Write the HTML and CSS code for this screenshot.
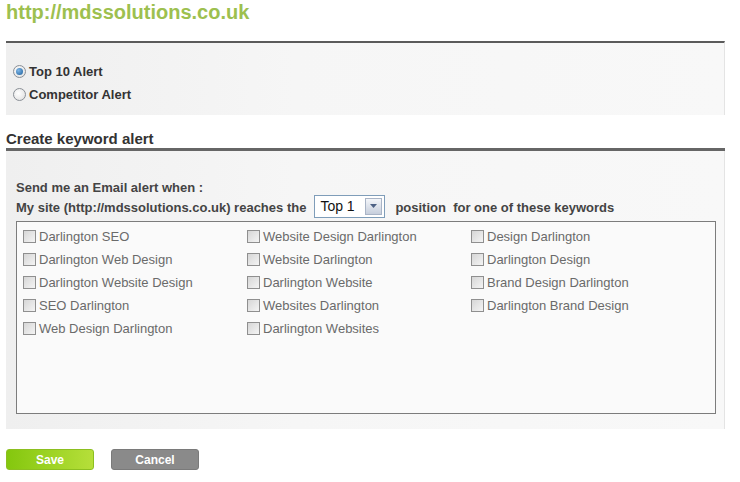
FILE: index.html
```html
<!DOCTYPE html>
<html lang="en">
  <head>
    <meta charset="UTF-8" />
    <title>Keyword Alerts - mdssolutions.co.uk</title>
    <link rel="stylesheet" href="styles.css">
  </head>
  <body>
    <div class="page">
      <h1 class="site-url">http://mdssolutions.co.uk</h1>

      <div class="panel alert-type">
        <label class="radio-row"><span class="radio checked"></span>Top 10 Alert</label>
        <label class="radio-row"><span class="radio"></span>Competitor Alert</label>
      </div>

      <h2 class="section-title">Create keyword alert</h2>

      <div class="panel keyword-panel">
        <p class="intro">Send me an Email alert when :</p>
        <div class="reach-row">
          <span>My site (http://mdssolutions.co.uk) reaches the</span>
          <div class="fake-select">
            <span class="fake-select-value">Top 1</span>
            <span class="fake-select-btn">
              <svg width="7" height="4" viewBox="0 0 7 4"><path d="M0 0h7L3.5 4z" fill="#4d6185"/></svg>
            </span>
          </div>
          <span>position&nbsp; for one of these keywords</span>
        </div>

        <div class="keyword-box">
          <label class="kw"><span class="checkbox"></span>Darlington SEO</label>
          <label class="kw"><span class="checkbox"></span>Website Design Darlington</label>
          <label class="kw"><span class="checkbox"></span>Design Darlington</label>
          <label class="kw"><span class="checkbox"></span>Darlington Web Design</label>
          <label class="kw"><span class="checkbox"></span>Website Darlington</label>
          <label class="kw"><span class="checkbox"></span>Darlington Design</label>
          <label class="kw"><span class="checkbox"></span>Darlington Website Design</label>
          <label class="kw"><span class="checkbox"></span>Darlington Website</label>
          <label class="kw"><span class="checkbox"></span>Brand Design Darlington</label>
          <label class="kw"><span class="checkbox"></span>SEO Darlington</label>
          <label class="kw"><span class="checkbox"></span>Websites Darlington</label>
          <label class="kw"><span class="checkbox"></span>Darlington Brand Design</label>
          <label class="kw"><span class="checkbox"></span>Web Design Darlington</label>
          <label class="kw"><span class="checkbox"></span>Darlington Websites</label>
        </div>
      </div>

      <div class="actions">
        <button class="btn save">Save</button>
        <button class="btn cancel">Cancel</button>
      </div>
    </div>
  </body>
</html>
```

FILE: styles.css
```css
body {
  margin: 0;
  background: white;
  font-family: "Liberation Sans", Arial, sans-serif;
  color: #333;
}
.page {
  width: 719px;
  padding: 0 6px;
}
.site-url {
  margin: 0;
  font-size: 20px;
  line-height: 24px;
  color: #9dc04f;
  font-weight: bold;
}
.panel {
  background: linear-gradient(to right, #efefef 0%, #f6f6f6 40%, #f8f8f8 100%);
  border-right: 1px solid #e4e4e4;
}
.alert-type {
  margin-top: 17px;
  border-top: 2px solid #5b5b5b;
  padding: 17px 0 9px 7px;
}
.radio-row {
  display: flex;
  align-items: center;
  height: 23px;
  font-size: 13px;
  font-weight: bold;
}
.radio {
  width: 11px;
  height: 11px;
  border: 1px solid #8a8f96;
  border-radius: 50%;
  background: radial-gradient(circle at 40% 40%, #ffffff, #dcdcdc);
  margin-right: 3px;
  position: relative;
}
.radio.checked::after {
  content: "";
  position: absolute;
  left: 2px;
  top: 2px;
  width: 7px;
  height: 7px;
  border-radius: 50%;
  background: radial-gradient(circle at 35% 35%, #7fb6e6, #1d5f9c);
}
.section-title {
  margin: 15px 0 0;
  font-size: 15px;
  line-height: 18px;
  font-weight: bold;
  color: #333;
  border-bottom: 3px solid #666;
}
.keyword-panel {
  padding: 28px 8px 15px 10px;
}
.intro {
  margin: 0;
  font-size: 13px;
  font-weight: bold;
  line-height: 18px;
  color: #444;
}
.reach-row {
  display: flex;
  align-items: center;
  height: 20px;
  font-size: 13px;
  font-weight: bold;
  color: #444;
}
.fake-select {
  display: flex;
  align-items: center;
  width: 69px;
  height: 21px;
  margin: -2px 10px 0 8px;
  border: 1px solid #7f9db9;
  background: white;
}
.fake-select-value {
  flex: 1;
  padding-left: 5px;
  font-size: 14px;
  font-weight: normal;
  color: #111;
}
.fake-select-btn {
  width: 15px;
  height: 15px;
  margin-right: 2px;
  border: 1px solid #a9b4c6;
  background: linear-gradient(#f4f6fa, #c6cedc);
  display: flex;
  align-items: center;
  justify-content: center;
}
.keyword-box {
  display: grid;
  grid-template-columns: 224px 224px 1fr;
  grid-auto-rows: 23px;
  align-content: start;
  height: 188px;
  margin-top: 4px;
  padding: 3px 6px 0;
  border: 1px solid #7c7c7c;
  background: #fafafa;
}
.kw {
  display: flex;
  align-items: center;
  font-size: 13px;
  color: #6a6a6a;
}
.checkbox {
  width: 11px;
  height: 11px;
  border: 1px solid #8f8f8f;
  background: linear-gradient(135deg, #d6d6d6, #f4f4f4);
  margin-right: 3px;
}
.actions {
  display: flex;
  gap: 17px;
  margin-top: 20px;
}
.btn {
  width: 88px;
  height: 21px;
  border-radius: 3px;
  font-family: "Liberation Sans", Arial, sans-serif;
  font-size: 12px;
  font-weight: bold;
  color: white;
  padding: 0;
  cursor: pointer;
}
.save {
  background: linear-gradient(to right, #84c70e, #b6df3a);
  border: 1px solid #8cbf20;
}
.cancel {
  background: #8a8a8a;
  border: 1px solid #7a7a7a;
}
```
